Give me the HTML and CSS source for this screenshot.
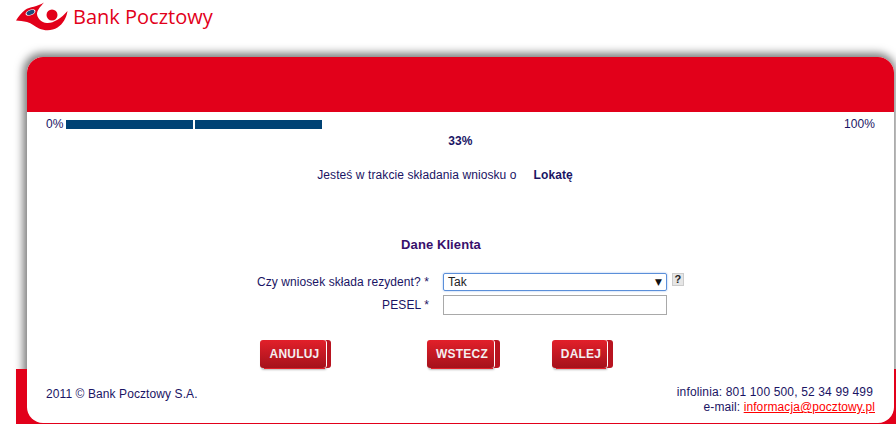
FILE: index.html
```html
<!DOCTYPE html>
<html lang="pl">

<head>
  <meta charset="UTF-8">
  <meta name="viewport" content="width=device-width, initial-scale=1.0">
  <title>Bank Pocztowy</title>
  <link rel="stylesheet" href="styles.css">
</head>

<body>
  <div class="header">
    <svg class="logo-mark" width="52" height="30" viewBox="16 2 52 30">
      <path fill="#e2001a" d="M16 20.500C18.500 16.500 21.500 12.500 25 10C30 6.500 37 7 44 2.500C41 6 37.500 9.500 37 13.500C37 18 41 22.500 47 23C53 23.500 61 18.500 67.500 11C66.500 18 63 24 57.500 27.500C52 31 45 31 39 28.500C34.500 26 32 23.500 27 22C23.500 21 19 21 16 20.500Z" />
      <ellipse fill="#fff" cx="30.500" cy="12.500" rx="5.200" ry="2.800" transform="rotate(-22 30.500 12.500)" />
      <ellipse fill="#1f4a7a" cx="30.500" cy="12.500" rx="4.200" ry="2.200" transform="rotate(-22 30.500 12.500)" />
      <circle fill="#e2001a" cx="52" cy="15" r="5.500" />
    </svg>
    <span class="logo-text">Bank Pocztowy</span>
  </div>

  <div class="frame">
    <div class="card">
      <div class="card-top"></div>

      <div class="progress">
        <span>0%</span>
        <div class="bar">
          <div class="bar-part"></div>
          <div class="bar-part"></div>
        </div>
        <span>100%</span>
      </div>
      <div class="percent">33%</div>

      <div class="intro">
        <span>Jesteś w trakcie składania wniosku o</span>
        <b>Lokatę</b>
      </div>

      <h2 class="title">Dane Klienta</h2>

      <form class="fields">
        <label for="rezydent">Czy wniosek składa rezydent? *</label>
        <div class="control">
          <div class="select" id="rezydent">Tak<span class="arrow">▼</span></div>
          <span class="help">?</span>
        </div>
        <label for="pesel">PESEL *</label>
        <div class="control">
          <input class="text-input" id="pesel" type="text">
        </div>
      </form>

      <div class="buttons">
        <button class="btn" type="button">ANULUJ</button>
        <button class="btn btn-back" type="button">WSTECZ</button>
        <button class="btn btn-next" type="button">DALEJ</button>
      </div>

      <div class="footer">
        <div class="copy">2011 © Bank Pocztowy S.A.</div>
        <div class="contact">
          <div class="hotline">infolinia: 801 100 500, 52 34 99 499</div>
          <div>e-mail: <a href="#">informacja@pocztowy.pl</a></div>
        </div>
      </div>
    </div>
  </div>
</body>

</html>
```

FILE: styles.css
```css
* {
  box-sizing: border-box;
}

html,
body {
  height: 424px;
  overflow: hidden;
}

body {
  margin: 0;
  background-color: #fff;
  font-family: "Liberation Sans", Arial, sans-serif;
  font-size: 12px;
  letter-spacing: 0.09px;
  color: #1a1464;
}

.header {
  display: flex;
  align-items: flex-start;
  height: 47px;
  padding: 2px 0 0 16px;
  letter-spacing: 0;
}

.logo-text {
  margin-left: 5px;
  font-family: "Open Sans", sans-serif;
  font-size: 20px;
  line-height: 30px;
  color: #e2001a;
}

.frame {
  position: relative;
  height: 377px;
  margin-left: 16px;
  padding: 10px 2px 0 11px;
}

/* grey shadow behind the card */
.frame::before {
  content: "";
  position: absolute;
  top: 10px;
  left: 11px;
  right: 2px;
  bottom: 0;
  border-radius: 16px;
  box-shadow: -1px -1px 9px 3px #7d7d7d;
}

/* red blocks showing at the bottom corners */
.frame::after {
  content: "";
  position: absolute;
  top: 322px;
  left: 0;
  right: 0;
  bottom: 0;
  background-color: #e2001a;
}

.card {
  position: relative;
  z-index: 1;
  height: 366px;
  background-color: #fff;
  border-radius: 16px;
}

.card-top {
  height: 55px;
  background-color: #e2001a;
  border-radius: 16px 16px 0 0;
}

.progress {
  display: flex;
  align-items: center;
  height: 14px;
  margin-top: 5px;
  padding: 0 19px;
}

.bar {
  display: flex;
  gap: 2px;
  width: 256px;
  margin-left: 2px;
  margin-right: auto;
}

.bar-part {
  width: 127px;
  height: 9px;
  background-color: #004274;
}

.percent {
  margin-top: 3px;
  font-weight: bold;
  line-height: 14px;
  text-align: center;
}

.intro {
  display: flex;
  justify-content: center;
  gap: 17px;
  margin-top: 20px;
  padding-right: 31px;
  line-height: 14px;
}

.title {
  margin: 56px 0 0;
  padding-right: 39px;
  font-size: 13px;
  line-height: 14px;
  color: #380f6b;
  text-align: center;
}

.fields {
  display: grid;
  grid-template-columns: 402px 241px;
  column-gap: 14px;
  row-gap: 4px;
  margin-top: 21px;
}

.fields label {
  align-self: center;
  text-align: right;
}

.control {
  display: flex;
  align-items: flex-start;
  gap: 5px;
}

.select {
  display: flex;
  justify-content: space-between;
  align-items: center;
  width: 224px;
  height: 18px;
  padding: 0 4px;
  border: 1px solid #5b8fd9;
  border-radius: 2px;
  box-shadow: 0 0 2px #8fb4ec;
  color: #222;
}

.arrow {
  font-family: "DejaVu Sans", sans-serif;
  font-size: 9px;
  color: #111;
}

.help {
  width: 12px;
  height: 13px;
  background-color: #e6e6e6;
  border: 1px solid #ccc;
  font-size: 11px;
  font-weight: bold;
  line-height: 11px;
  color: #222;
  text-align: center;
}

.text-input {
  width: 224px;
  height: 20px;
  padding: 0 4px;
  border: 1px solid #a9a9a9;
  background-color: #fff;
}

.buttons {
  display: flex;
  margin-top: 25px;
  padding-left: 233px;
}

.btn {
  position: relative;
  width: 66px;
  height: 28px;
  padding: 0 0 0 3px;
  border: none;
  border-radius: 3px;
  background: linear-gradient(#e2202a, #a5121c);
  box-shadow: 1px 0 0 #fff, 5px 0 0 #b81420, 1px 2px 2px #bbb;
  font-family: "Liberation Sans", Arial, sans-serif;
  font-size: 12px;
  font-weight: bold;
  letter-spacing: 0.2px;
  color: #f4eef0;
  cursor: pointer;
}

/* thin red line under each button */
.btn::after {
  content: "";
  position: absolute;
  left: 4px;
  right: 1px;
  bottom: -1px;
  height: 1px;
  background-color: #e2202a;
}

.btn-back {
  width: 67px;
  margin-left: 101px;
  box-shadow: 1px 0 0 #fff, 6px 0 0 #b81420, 1px 2px 2px #bbb;
}

.btn-next {
  width: 55px;
  margin-left: 58px;
  box-shadow: 1px 0 0 #fff, 6px 0 0 #b81420, 1px 2px 2px #bbb;
}

.footer {
  display: flex;
  justify-content: space-between;
  align-items: flex-start;
  margin-top: 17px;
  padding: 0 19px;
  line-height: 15px;
}

.copy {
  margin-top: 2px;
}

.contact {
  text-align: right;
}

.hotline {
  padding-right: 2px;
  letter-spacing: 0.15px;
}

.contact a {
  color: #f00;
}
```
